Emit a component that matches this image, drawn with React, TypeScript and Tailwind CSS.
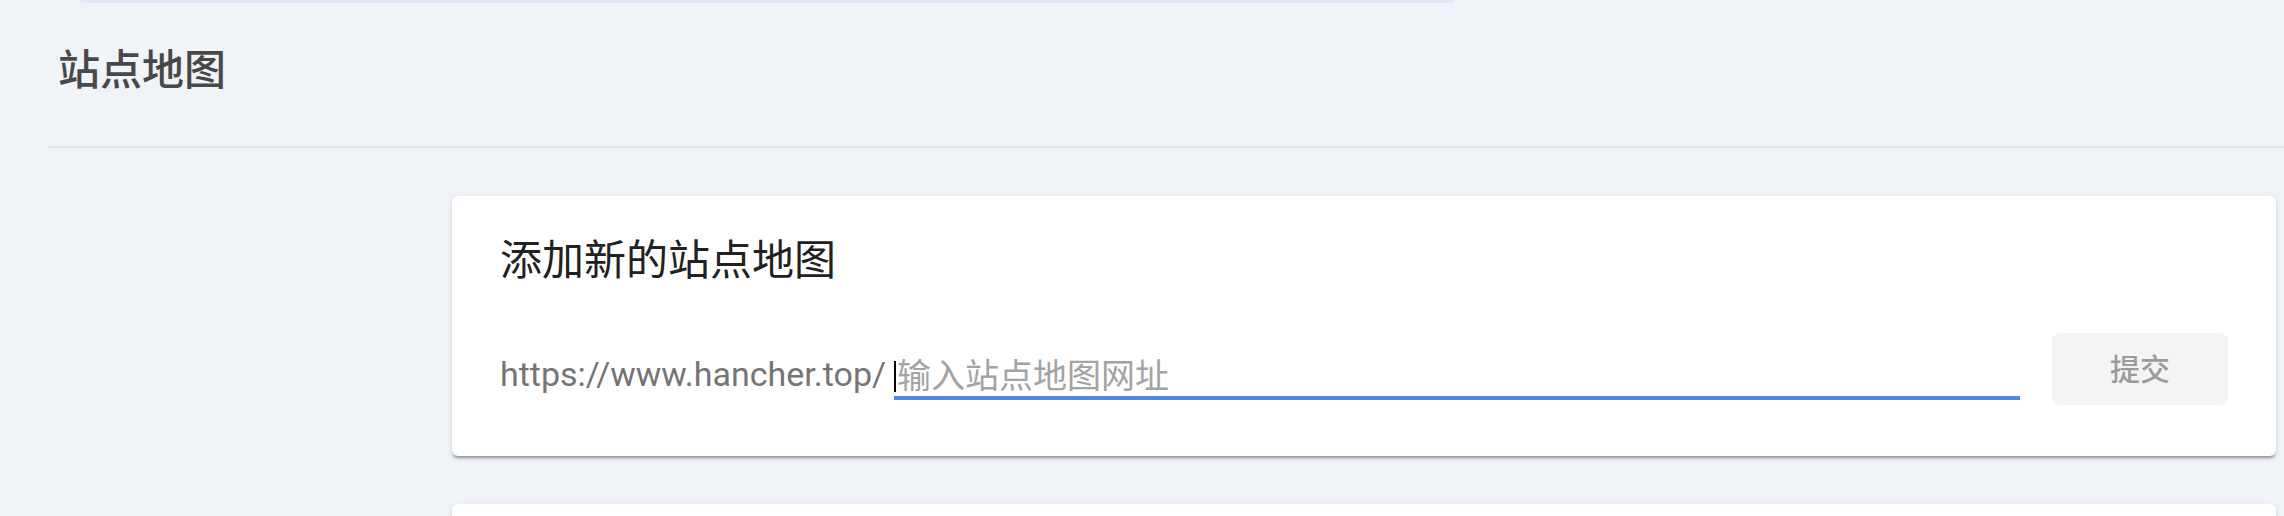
import React from "react";

const FONT = { fontFamily: "Roboto, 'Noto Sans CJK SC', sans-serif" };

export default function App() {
  return (
    <div
      className="w-full h-[516px] overflow-hidden bg-[#f0f3f8]"
      style={FONT}
    >
      {/* bottom edge of a previous panel */}
      <div className="ml-[80px] w-[1375px] h-[3px] rounded-b-[6px] bg-[#e2e9f7]" />

      {/* page heading */}
      <div className="h-[143px] flex items-center pl-[58px] pb-[8px]">
        <h1 className="text-[42px] leading-none font-medium text-[#484848]">站点地图</h1>
      </div>
      <div className="ml-[48px] h-[2px] bg-[#e1e2e2]" />

      <div className="pl-[452px] pr-[8px] pt-[48px]">
        {/* card */}
        <div className="bg-white rounded-[6px] shadow-[0_4px_3px_-2px_rgba(0,0,0,0.25),0_2px_2px_0_rgba(0,0,0,0.12),0_2px_6px_0_rgba(0,0,0,0.10)] px-[48px] pt-[44px] pb-[51px]">
          <h2 className="text-[42px] leading-[42px] text-[#212121] font-normal">添加新的站点地图</h2>

          <div className="mt-[51px] flex items-end gap-[32px]">
            <div className="flex-1 h-[72px] flex items-end pb-[5px]">
              <span className="w-[394px] shrink-0 whitespace-nowrap text-[34px] leading-[40px] text-[#757575] pb-[6px]">
                https://www.hancher.top/
              </span>
              <div className="flex-1 border-b-4 border-[#5085e9] h-[40px] flex items-end">
                <span className="w-[2px] h-[31px] bg-black mb-[4px]" />
                <span className="ml-[1px] text-[34px] leading-[40px] text-[#a3a3a3]">输入站点地图网址</span>
              </div>
            </div>
            <button className="w-[176px] h-[72px] shrink-0 rounded-[8px] bg-[#f4f4f4] text-[30px] text-[#9b9b9b] font-medium flex items-center justify-center">
              提交
            </button>
          </div>
        </div>

        {/* next card (cut off) */}
        <div className="mt-[48px] h-[200px] bg-white rounded-[6px] shadow-[0_4px_3px_-2px_rgba(0,0,0,0.25),0_2px_2px_0_rgba(0,0,0,0.12),0_2px_6px_0_rgba(0,0,0,0.10)]" />
      </div>
    </div>
  );
}
